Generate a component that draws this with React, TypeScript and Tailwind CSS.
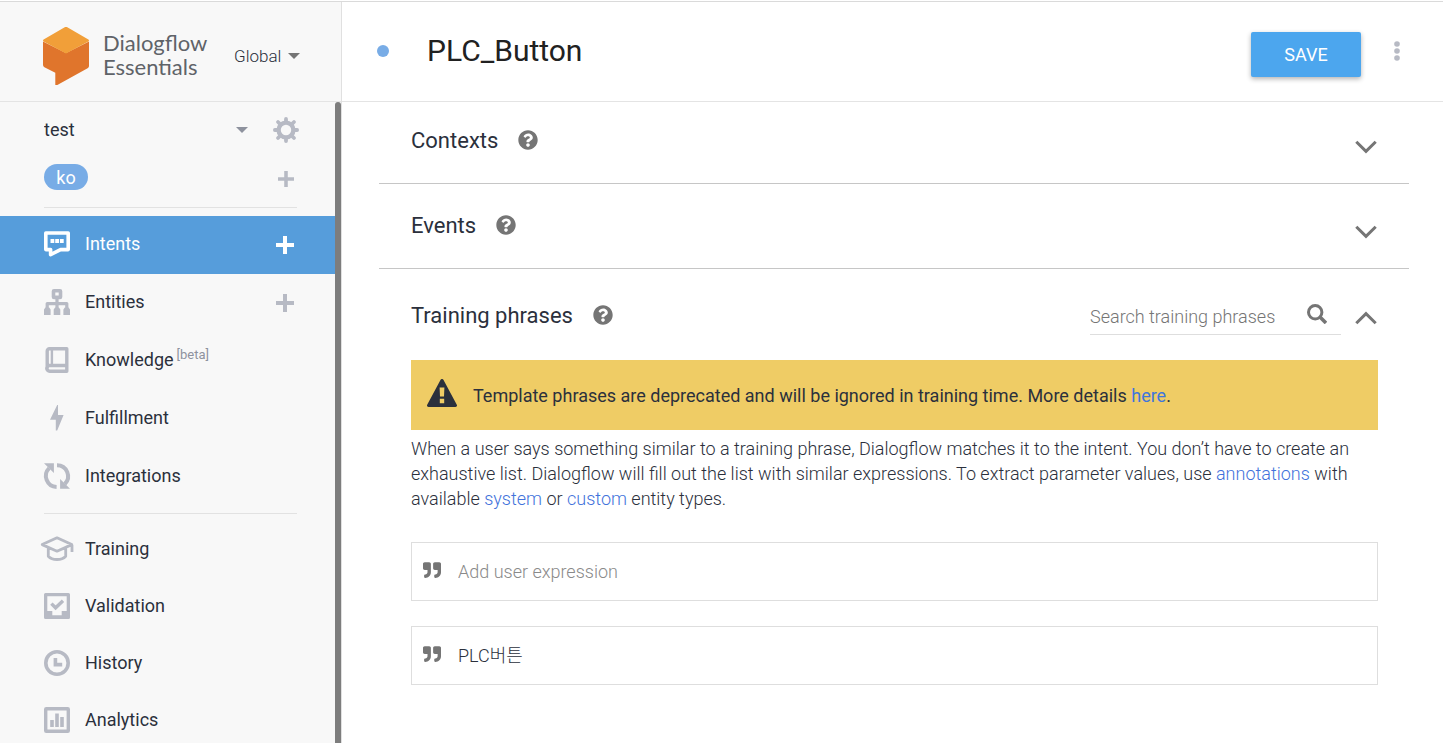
import { useState } from "react";
import type { ReactNode } from "react";
import { FaQuestionCircle, FaQuoteRight } from "react-icons/fa";

type NavItem = {
  label: string;
  icon: ReactNode;
  badge?: string;
  canAdd?: boolean;
};

const Icon = ({ children }: { children: ReactNode }) => (
  <svg viewBox="0 0 26 26" className="h-[26px] w-[26px] shrink-0 overflow-visible" fill="none" stroke="currentColor" aria-hidden="true">
    {children}
  </svg>
);

const mainNav: NavItem[] = [
  {
    label: "Intents",
    canAdd: true,
    icon: (
      <Icon>
        <path d="M1.8 2h22.4v16.6h-7.6L6.6 23.6v-5H1.8z" strokeWidth="3.6" strokeLinejoin="round" />
        <path d="M6.500 8.100h3.800v3.800H6.500zM11.200 8.100H15v3.800h-3.800zM15.900 8.100h3.800v3.800h-3.800z" fill="currentColor" stroke="none" />
      </Icon>
    ),
  },
  {
    label: "Entities",
    canAdd: true,
    icon: (
      <Icon>
        <rect x="9.500" y="1.800" width="7" height="6.600" rx="0.5" strokeWidth="3.600" />
        <path d="M13 9.5V20M3.2 20v-5.4h19.6V20" strokeWidth="3.200" strokeLinejoin="round" />
        <path d="M1.4 18.500h3.8L6.6 20.500v5.500H0v-5.500zM11.1 18.500h3.8l1.4 2v5.500H9.7v-5.500zM20.8 18.500h3.8l1.4 2v5.500h-6.6v-5.500z" fill="currentColor" stroke="none" />
      </Icon>
    ),
  },
  {
    label: "Knowledge",
    badge: "[beta]",
    icon: (
      <Icon>
        <path d="M3.200 21.500V4a2.200 2.200 0 0 1 2.200-2.200h17.400v22.400H5.600a2.400 2.400 0 0 1 0-5.700h17" strokeWidth="3.400" strokeLinejoin="round" />
        <path d="M7.900 2v16" strokeWidth="2.400" />
      </Icon>
    ),
  },
  {
    label: "Fulfillment",
    icon: (
      <Icon>
        <path d="M13.2 0 6 14.8h5.8V25.5h1.400L19.600 10H14V0z" fill="currentColor" stroke="none" />
      </Icon>
    ),
  },
  {
    label: "Integrations",
    icon: (
      <Icon>
        <path d="M12.600 24A11 11 0 0 1 5.2 5.200M13 2.200a11 11 0 0 1 7.800 18.800" strokeWidth="4" />
        <path d="M0 .2h9.900v9.800zM26 25.800H16.100v-9.800z" fill="currentColor" stroke="none" />
      </Icon>
    ),
  },
];

const toolsNav: NavItem[] = [
  {
    label: "Training",
    icon: (
      <Icon>
        <path d="M-1.8 8.6 13 1.8l14.8 6.8L13 15.2zM4.3 12v8.2c4 4.4 13.400 4.400 17.400 0V12M28 9v7" strokeWidth="2.800" strokeLinejoin="round" />
      </Icon>
    ),
  },
  {
    label: "Validation",
    icon: (
      <Icon>
        <path
          d="M1.500 0h23A1.500 1.500 0 0 1 26 1.500v23a1.500 1.500 0 0 1-1.500 1.500h-23A1.500 1.500 0 0 1 0 24.500v-23A1.500 1.500 0 0 1 1.500 0zM3.300 3.300V18h5v4.300h9.400V18h5V3.300z"
          fill="currentColor"
          fillRule="evenodd"
          stroke="none"
        />
        <path d="m7.400 10.600 4.200 4.200 7.400-7" strokeWidth="3.400" />
      </Icon>
    ),
  },
  {
    label: "History",
    icon: (
      <Icon>
        <circle cx="13" cy="13" r="11.200" strokeWidth="3.600" />
        <path d="M11.400 8v6.600h6.800" strokeWidth="3.600" />
      </Icon>
    ),
  },
  {
    label: "Analytics",
    icon: (
      <Icon>
        <rect x="1.700" y="1.700" width="22.600" height="22.600" rx="0.500" strokeWidth="3.400" />
        <path d="M8 13v7M13 6.500V20M18 10v10" strokeWidth="3.600" />
      </Icon>
    ),
  },
];

function Plus({ className }: { className: string }) {
  return (
    <svg viewBox="0 0 18 18" className={className} stroke="currentColor" strokeWidth="4" aria-hidden="true">
      <path d="M9 0v18M0 9h18" />
    </svg>
  );
}

function Caret() {
  return (
    <svg viewBox="0 0 12 6" className="pointer-events-none h-1.5 w-3 shrink-0" fill="currentColor" aria-hidden="true">
      <path d="M0 0h12L6 6z" />
    </svg>
  );
}

function Chevron({ open }: { open: boolean }) {
  return (
    <svg viewBox="0 0 22 14" className="h-3.5 w-[22px]" fill="none" stroke="#757575" strokeWidth="3" aria-hidden="true">
      <path d={open ? "M1.300 12.200 11 2.600l9.700 9.600" : "m1.300 1.800 9.700 9.600 9.700-9.600"} />
    </svg>
  );
}

function Logo() {
  return (
    <a href="#" className="flex items-center text-[#5f6368]">
      <svg viewBox="0 0 46 58" className="h-[58px] w-[46px]" aria-hidden="true">
        <path d="M0 14.500 23 26l23-11.500v24.300c0 1-.5 1.900-1.400 2.400L13.600 58.400c-.7.400-1.300 0-1.300-.8V45.800L1.400 40.200A2.500 2.500 0 0 1 0 38z" fill="#e0752c" />
        <path d="M21.700.3.6 12.600c-.8.500-.8 1.300 0 1.800L23 26.400l22.400-12c.8-.5.8-1.300 0-1.800L24.300.3a2.600 2.600 0 0 0-2.600 0z" fill="#f19f39" />
      </svg>
      <span className="mb-0.5 ml-3.5 font-['Lato',sans-serif] text-[22px] leading-6">
        Dialogflow
        <br />
        Essentials
      </span>
    </a>
  );
}

function NavRow({ item, active, onSelect, compact }: { item: NavItem; active: boolean; onSelect: () => void; compact?: boolean }) {
  return (
    <li
      className={`flex items-center pr-[41px] pl-11 ${compact ? "h-[57px] pb-0.5 first:h-14" : "h-[58px] pb-0.5"} ${
        active ? "bg-[#569ddb] text-white" : "text-[#b7bac4]"
      }`}
    >
      <a href="#" onClick={onSelect} className="flex flex-1 items-center">
        {item.icon}
        <span className={`ml-[15px] text-lg leading-6 ${active ? "text-white" : "text-[#2b303c]"}`}>{item.label}</span>
        {item.badge && <span className="mb-2.5 ml-[3px] text-[13px] leading-4 text-[#8e929e]">{item.badge}</span>}
      </a>
      {item.canAdd && (
        <button type="button" aria-label={`Create ${item.label}`} className="mt-0.5">
          <Plus className="h-[18px] w-[18px]" />
        </button>
      )}
    </li>
  );
}

function Sidebar() {
  const [current, setCurrent] = useState("Intents");

  return (
    <aside className="flex w-[342px] shrink-0 flex-col border-r border-[#e0e0e0] bg-[#f8f8f8]">
      <div className="flex h-[100px] shrink-0 items-center border-b border-[#e4e4e4] pt-2 pl-[43px]">
        <Logo />
        <div className="ml-auto flex items-center pr-[41px] text-[#757575]">
          <select aria-label="Region" className="mr-1.5 appearance-none bg-transparent text-[17px] leading-6 font-light text-[#2b303c]">
            <option>Global</option>
          </select>
          <Caret />
        </div>
      </div>

      <div className="flex min-h-0 flex-1">
        <div className="flex-1 overflow-hidden">
          <div className="flex h-14 items-center pr-9 pl-11 text-[#b7bac4]">
            <select aria-label="Agent" className="flex-1 appearance-none bg-transparent text-lg leading-6 text-[#2b303c]">
              <option>test</option>
            </select>
            <span className="mr-[25px] flex text-[#8e929e]">
              <Caret />
            </span>
            <button type="button" aria-label="Agent settings">
              <Icon>
                <circle cx="13" cy="13" r="7.400" strokeWidth="4.400" />
                <path
                  d="M13 5V1.900M13 21v3.100M5 13H1.900M21 13h3.100M7 7 5 5M19 19l2 2M7 19l-2 2M19 7l2-2"
                  strokeWidth="3.800"
                  strokeLinecap="round"
                />
              </Icon>
            </button>
          </div>

          <div className="ml-11 mr-[38px] flex h-[50px] items-start justify-between border-b border-[#e2e2e2] pt-1.5">
            <span className="flex h-[26px] w-11 items-center justify-center rounded-full bg-[#78ace6] pt-0.5 text-lg text-white">ko</span>
            <button type="button" aria-label="Add language" className="mt-[7px] mr-[3px] text-[#b7bac4]">
              <Plus className="h-4 w-4" />
            </button>
          </div>

          <ul className="mt-2">
            {mainNav.map((item) => (
              <NavRow key={item.label} item={item} active={current === item.label} onSelect={() => setCurrent(item.label)} />
            ))}
          </ul>
          <hr className="mt-[7px] mr-[38px] mb-2 ml-11 border-[#e2e2e2]" />
          <ul>
            {toolsNav.map((item) => (
              <NavRow key={item.label} item={item} compact active={current === item.label} onSelect={() => setCurrent(item.label)} />
            ))}
          </ul>
        </div>
        {/* Scroll thumb */}
        <div className="w-1.5 rounded-t-full bg-[#7d7d7d]" />
      </div>
    </aside>
  );
}

function SectionTitle({ title }: { title: string }) {
  return (
    <div className="flex items-center gap-5 text-[#2b303c]">
      <h2 className="pt-0.5 text-[22px] leading-8">{title}</h2>
      <button type="button" aria-label={`About ${title}`}>
        <FaQuestionCircle className="h-5 w-5 text-[#757575]" />
      </button>
    </div>
  );
}

function ClosedSection({ title }: { title: string }) {
  return (
    <section className="flex items-center justify-between border-b border-[#c6c6c6] px-8 pt-6 pb-[26px] first:pt-[21px]">
      <SectionTitle title={title} />
      <button type="button" aria-label={`Expand ${title}`} className="mt-3.5">
        <Chevron open={false} />
      </button>
    </section>
  );
}

function PhraseInput({ label, defaultValue }: { label: string; defaultValue?: string }) {
  return (
    <label className="flex h-[59px] items-center border border-[#dedede] pl-[11px] focus-within:border-[#78ace6]">
      <FaQuoteRight className="mb-1 h-[18px] w-[18px] shrink-0 text-[#757575]" />
      <input
        type="text"
        aria-label={label}
        placeholder="Add user expression"
        defaultValue={defaultValue}
        className="ml-[17px] flex-1 bg-transparent text-lg leading-6 font-light text-[#2b303c] outline-none placeholder:text-[#8a8a8a]"
      />
    </label>
  );
}

function TrainingPhrases() {
  return (
    <section className="pr-[31px] pl-8">
      <div className="flex items-center justify-between pt-[26px] pb-[25px]">
        <SectionTitle title="Training phrases" />
        <div className="flex items-center">
          <label className="mr-3.5 flex h-10 w-[251px] items-center border-b border-[#dedede] pt-1">
            <input
              type="search"
              aria-label="Search training phrases"
              placeholder="Search training phrases"
              className="min-w-0 flex-1 bg-transparent text-lg leading-6 font-light outline-none placeholder:text-[#757575]"
            />
            <svg viewBox="0 0 20 20" className="mr-3.5 mb-1.5 h-5 w-5" fill="none" stroke="#757575" aria-hidden="true">
              <circle cx="8.200" cy="8.200" r="6.700" strokeWidth="3" />
              <path d="m13 13 6 6" strokeWidth="3.600" />
            </svg>
          </label>
          <button type="button" aria-label="Collapse Training phrases" className="mt-1.5 mr-px">
            <Chevron open />
          </button>
        </div>
      </div>

      <div className="flex h-[70px] items-center bg-[#efcc65] pl-4 text-lg leading-6 text-[#2b303c]">
        <svg viewBox="0 0 30 28" className="mr-4 mb-1 h-7 w-[30px] shrink-0" aria-hidden="true">
          <path
            d="M13.600.8c.6-1.100 2.200-1.100 2.800 0l13.400 25c.6 1-.1 2.200-1.300 2.200h-27C.3 28-.4 26.800.2 25.800zM12.600 8.500l.4 9h4l.4-9zM12.800 19.800v4.400h4.400v-4.400z"
            fill="#2b303c"
            fillRule="evenodd"
          />
        </svg>
        <p className="pt-0.5">
          Template phrases are deprecated and will be ignored in training time. More details{" "}
          <a href="#" className="text-[#3f76dc]">here</a>.
        </p>
      </div>

      <p className="pt-1.5 pb-[31px] text-lg leading-[25px] font-light text-[#2b303c]">
        When a user says something similar to a training phrase, Dialogflow matches it to the intent. You don’t have to create an
        exhaustive list. Dialogflow will fill out the list with similar expressions. To extract parameter values, use{" "}
        <a href="#" className="text-[#4272db]">annotations</a> with available <a href="#" className="text-[#4272db]">system</a> or{" "}
        <a href="#" className="text-[#4272db]">custom</a> entity types.
      </p>

      <div className="flex flex-col gap-[25px]">
        <PhraseInput label="New user expression" />
        <PhraseInput label="User expression" defaultValue="PLC버튼" />
      </div>
    </section>
  );
}

export default function App() {
  return (
    <div className="h-screen bg-white pt-px font-['Roboto','Noto_Sans_CJK_KR',sans-serif]">
      <div className="flex h-full border-t border-[#dadada]">
        <Sidebar />
        <div className="flex min-w-0 flex-1 flex-col">
          <header className="flex h-[100px] shrink-0 items-center border-b border-[#e4e4e4] pr-[43px] pb-0.5 pl-[35px]">
            <span className="h-3 w-3 rounded-full bg-[#78ace6]" />
            <h1 className="ml-[38px] flex-1 text-[30px] leading-10 text-[#212121]">PLC_Button</h1>
            <button type="button" className="mt-2 h-[45px] w-[110px] rounded-xs bg-[#4ca6ee] text-lg text-white shadow-[0_2px_5px_rgba(0,0,0,0.3)]">
              SAVE
            </button>
            <button type="button" aria-label="More options" className="ml-[33px]">
              <svg viewBox="0 0 6 20" className="h-5 w-1.5" fill="#b7bac4" aria-hidden="true">
                <circle cx="3" cy="3" r="2.800" />
                <circle cx="3" cy="10" r="2.800" />
                <circle cx="3" cy="17" r="2.800" />
              </svg>
            </button>
          </header>

          <main className="flex-1 overflow-hidden pr-[34px] pl-[37px]">
            <ClosedSection title="Contexts" />
            <ClosedSection title="Events" />
            <TrainingPhrases />
          </main>
        </div>
      </div>
    </div>
  );
}
